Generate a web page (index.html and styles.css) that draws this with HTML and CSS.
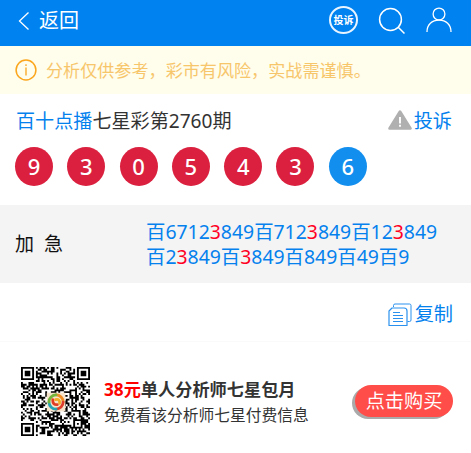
FILE: index.html
```
<!DOCTYPE html>
<html lang="zh-CN">
<head>
<meta charset="utf-8">
<title>七星彩</title>
<link rel="stylesheet" href="styles.css">
</head>
<body>
<header class="topbar">
  <a class="back"><svg width="12" height="20" viewBox="0 0 12 20"><path d="M10.5 1.500 1.500 10l9 8.500" fill="none" stroke="#fff" stroke-width="1.3"/></svg><span>返回</span></a>
  <div class="tools">
    <span class="badge">投诉</span>
    <svg class="search" width="28" height="28" viewBox="0 0 28 28" fill="none" stroke="#fff" stroke-width="1.5"><circle cx="12.500" cy="12.500" r="10.900"/><path d="M20 20l6.500 6.500"/></svg>
    <svg class="user" width="26" height="26" viewBox="0 0 26 26" fill="none" stroke="#fff" stroke-width="1.3"><circle cx="13" cy="7" r="5.900"/><path d="M1 25C1 17.500 6 13.200 13 13.200s12 4.300 12 11.800"/></svg>
  </div>
</header>
<div class="notice">
  <svg width="22" height="22" viewBox="0 0 22 22"><circle cx="11" cy="11" r="9.900" fill="none" stroke="#fba61c" stroke-width="1.500"/><path d="M11 8.500v8M11 5.200v1.800" stroke="#fba61c" stroke-width="1.300"/></svg>
  <span>分析仅供参考，彩市有风险，实战需谨慎。</span>
</div>
<section class="issue">
  <div class="heading">
    <div class="title"><a>百十点播</a>七星彩第2760期</div>
    <a class="report"><svg width="24" height="20" viewBox="0 0 24 20"><path d="M12 1.500 22.500 18.500h-21z" fill="#b0b0b0" stroke="#b0b0b0" stroke-width="2.600" stroke-linejoin="round"/><path d="M12 7v6.500M12 14.800v2" stroke="#fff" stroke-width="1.900"/></svg>投诉</a>
  </div>
  <div class="balls"><b>9</b><b>3</b><b>0</b><b>5</b><b>4</b><b>3</b><b class="blue">6</b></div>
</section>
<section class="plan">
  <div class="label">加&nbsp; 急</div>
  <div class="numbers">百6712<i>3</i>849百712<i>3</i>849百12<i>3</i>849<br>百2<i>3</i>849百<i>3</i>849百849百49百9</div>
</section>
<div class="copyrow"><a><svg width="24" height="24" viewBox="0 0 24 24" fill="none" stroke="#2b91ee"><path d="M5.500 4V2.500q0-1.500 1.500-1.500h14.500q1.500 0 1.500 1.500v14.500q0 1.500-1.500 1.500h-2" stroke-width="1"/><path d="M4 5h12q3 0 3 3v14.500H1V8z" stroke-width="1.200" stroke-linejoin="round"/><path d="M5 9.500h7M5 12.500h10M5 15.500h10M5 18.500h10" stroke-width="1.200"/></svg>复制</a></div>
<section class="promo">
  <svg class="qr" width="69" height="69" viewBox="0 0 37 37">
    <path id="modules"/>
    <rect x="13.800" y="13.800" width="10" height="10" fill="#f6e5cc"/>
    <g fill="none" stroke-width="1.500" stroke-linecap="round">
      <path d="M18.800 15a3.800 3.800 0 0 1 3.800 3.800" stroke="#ef8b24"/>
      <path d="M22.600 18.800a3.800 3.800 0 0 1-3.800 3.800" stroke="#dc3c2a"/>
      <path d="M18.800 22.600a3.800 3.800 0 0 1-3.800-3.600" stroke="#28a5b5"/>
      <path d="M15 18.800a3.800 3.800 0 0 1 3.800-3.800" stroke="#72b43b"/>
      <path d="M17 17.500q0 3 2.500 2.700" stroke="#e23c24"/><path d="M18.500 17.500q2.500-.6 2.200 2" stroke="#f2ad28"/>
    </g>
  </svg>
  <div class="desc">
    <div class="name"><em>38元</em>单人分析师七星包月</div>
    <div class="sub">免费看该分析师七星付费信息</div>
  </div>
  <a class="buy">点击购买</a>
</section>
<script src="qr.js"></script>
</body>
</html>
```
FILE: styles.css
```
* { box-sizing: border-box; }
body {
  margin: 0;
  background: #fff;
  color: #333;
  font-family: "Noto Sans", "Noto Sans CJK SC", sans-serif;
  font-size: 19.2px;
  line-height: 26px;
}
svg { display: block; flex: none; }
a { color: #0581ee; }
.topbar {
  height: 46px;
  padding: 0 19px 0 18px;
  display: flex;
  justify-content: space-between;
  background: #0082f0;
}
.back { display: flex; align-items: center; gap: 9px; color: #fff; font-size: 20px; padding-bottom: 4px; }
.tools { display: flex; align-items: flex-start; padding-top: 6px; }
.badge {
  width: 29px;
  height: 28px;
  border: 2px solid #e8f4ff;
  border-radius: 50%;
  color: #fff;
  font-size: 10px;
  font-weight: 700;
  line-height: 25px;
  text-align: center;
  white-space: nowrap;
}
.search { margin: 1px 0 0 20px; }
.user { margin: 1px 0 0 20px; }
.notice {
  height: 48px;
  padding: 0 15px;
  display: flex;
  align-items: center;
  gap: 9px;
  background: #fffdeb;
  color: #f7c66b;
  font-size: 17.1px;
  white-space: nowrap;
}
.notice span { padding-top: 2px; }
.issue { height: 111px; padding: 14px 18px 0 15px; }
.heading { display: flex; justify-content: space-between; height: 39px; }
.title { font-size: 19.100px; padding-left: 1px; white-space: nowrap; }
.report { display: flex; gap: 2px; margin-right: 1px; }
.report svg { margin-top: 2px; }
.balls { display: flex; gap: 14.300px; }
.balls b {
  width: 38px;
  height: 39px;
  border-radius: 50%;
  background: #da203e;
  color: #fff;
  font-size: 22px;
  font-weight: 500;
  line-height: 38px;
  text-align: center;
}
.balls .blue { background: #118eee; }
.plan { height: 78px; padding: 0 15px; display: flex; align-items: center; background: #f4f4f4; }
.label { width: 131px; color: #111; font-size: 19px; }
.numbers { color: #0581ee; font-size: 19.400px; line-height: 25px; white-space: nowrap; }
.numbers i { font-style: normal; color: #ff0024; }
.copyrow { height: 59px; padding: 18px 18px 0 0; display: flex; justify-content: flex-end; border-bottom: 1px solid #fafafa; }
.copyrow a { display: flex; gap: 3px; }
.copyrow svg { margin-top: 2px; }
.promo { height: 111px; padding: 25px 18px 0 21px; display: flex; }
.desc { margin: 10px 0 0 14px; white-space: nowrap; }
.name { font-size: 17.200px; font-weight: 700; }
.name em { font-style: normal; color: #f00; }
.sub { font-size: 15.750px; line-height: 25px; }
.buy {
  width: 98px;
  height: 32px;
  margin: 18px 0 0 auto;
  border-radius: 16px;
  background: #ff4d49;
  box-shadow: -3px 2px 0 #aaa;
  color: #fff;
  line-height: 32px;
  text-align: center;
  white-space: nowrap;
}
```
FILE: qr.js
```
const size = 37;
let seed = 2760;
const next = () => (seed = (seed * 1103515245 + 12345) % 2147483648) / 2147483648;

// Square ring pattern around a centre point, shared by finders and alignment mark.
function ring(x, y, cx, cy, radius) {
  const d = Math.max(Math.abs(x - cx), Math.abs(y - cy));
  if (d > radius) return null;
  return radius >= 4 ? d === 3 || d < 2 : d !== 1;
}

let path = "";
for (let y = 0; y < size; y++) {
  for (let x = 0; x < size; x++) {
    const data = next() < 0.54;
    const dark = ring(x, y, 3, 3, 4) ?? ring(x, y, 33, 3, 4) ??
      ring(x, y, 3, 33, 4) ?? ring(x, y, 30, 30, 2) ?? data;
    if (dark) path += `M${x} ${y}h1v1h-1z`;
  }
}
document.getElementById("modules").setAttribute("d", path);
```
